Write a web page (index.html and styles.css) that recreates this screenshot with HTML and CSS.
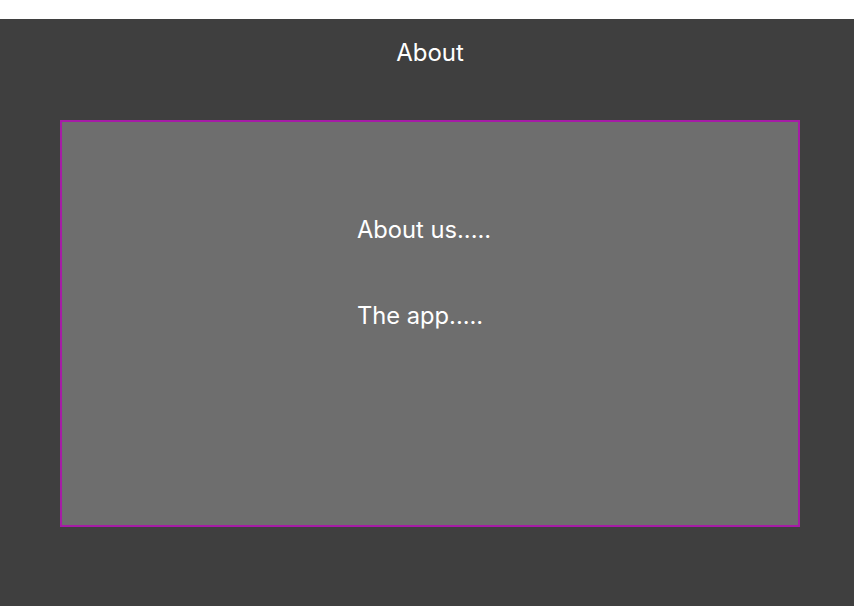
FILE: index.html
```html
<!DOCTYPE html>
<html>
<head>
<meta charset="utf-8">
<link rel="stylesheet" href="styles.css">
</head>
<body>
<div class="topbar"></div>
<main class="screen">
  <div class="column">
    <h1 class="title">About</h1>
    <section class="panel">
      <p class="line">About us.....</p>
      <p class="line">The app.....</p>
    </section>
  </div>
</main>
</body>
</html>
```
FILE: styles.css
```css
html, body {
  margin: 0;
  padding: 0;
  height: 100%;
  background: #ffffff;
  font-family: Inter, "Noto Sans", sans-serif;
}
body {
  display: flex;
  flex-direction: column;
}
.topbar {
  height: 19px;
  background: #ffffff;
  flex: none;
}
.screen {
  flex: 1;
  background: #3f3f3f;
  padding-left: 60px;
}
.column {
  width: 740px;
  display: flex;
  flex-direction: column;
}
.title {
  margin: 19px 0 0 0;
  text-align: center;
  font-size: 24px;
  font-weight: 400;
  line-height: 30px;
  color: #ffffff;
}
.panel {
  box-sizing: border-box;
  margin-top: 52px;
  height: 407px;
  background: #6e6e6e;
  border: 2px solid #a61ca6;
  padding: 93px 0 0 295px;
}
.line {
  margin: 0 0 56px 0;
  font-size: 23.7px;
  line-height: 30px;
  color: #ffffff;
  white-space: nowrap;
}
```
